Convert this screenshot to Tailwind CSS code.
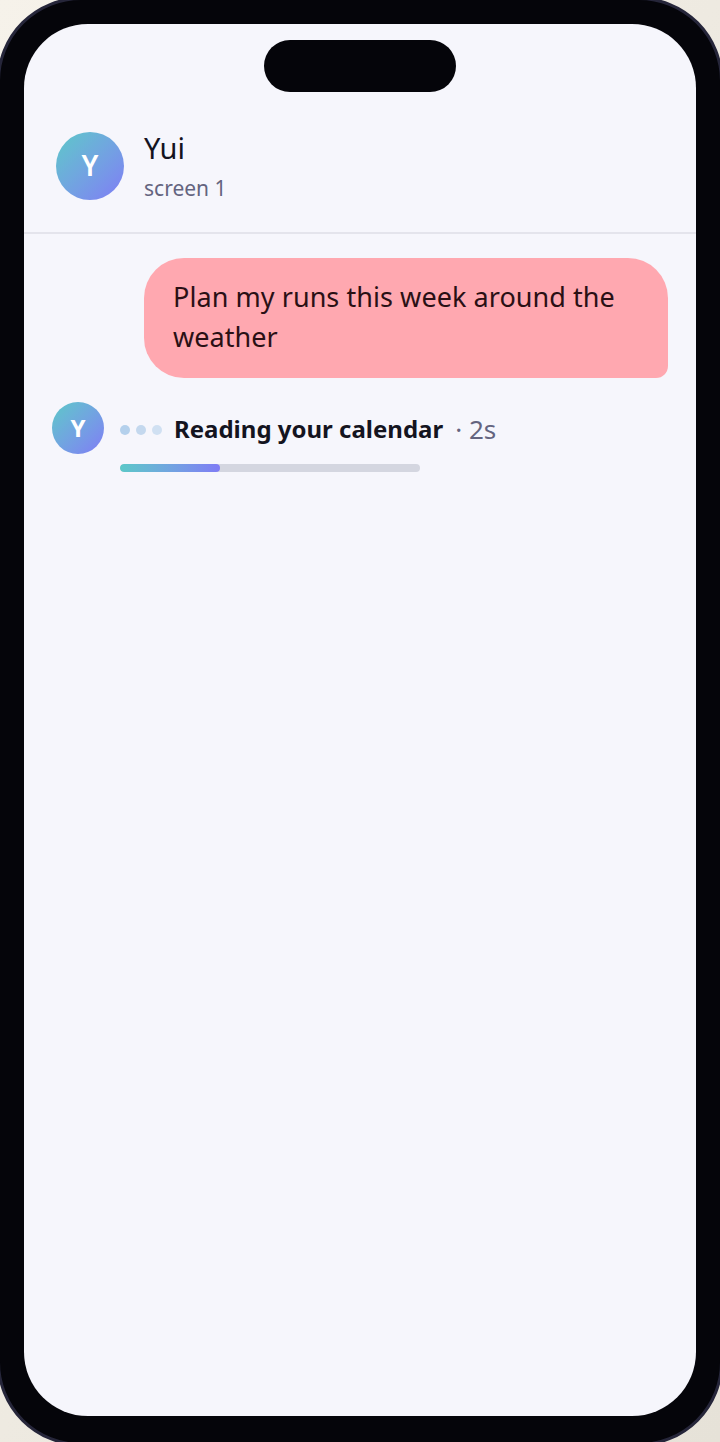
<!DOCTYPE html>
<html lang="en">
<head>
  <meta charset="UTF-8" />
  <meta name="viewport" content="width=device-width, initial-scale=1.0" />
  <title>Yui</title>
  <script src="https://cdn.jsdelivr.net/npm/@tailwindcss/browser@4"></script>
</head>
<body class="h-[1442px] w-[720px] overflow-hidden bg-gradient-to-br from-[#f6f2ea] to-[#e6e2d8] font-['Noto_Sans',sans-serif]">
  <!-- phone frame -->
  <div class="-ml-[3px] -mt-[3px] h-[1449px] w-[726px] rounded-[84px] border-[3px] border-[#26263a] bg-[#05050a] p-[24px]">
    <div class="relative flex h-[1392px] w-full flex-col overflow-hidden rounded-[64px] bg-[#f6f6fc]">
      <!-- notch -->
      <div class="absolute left-[240px] top-[16px] h-[52px] w-[192px] rounded-[26px] bg-[#05050a]"></div>

      <!-- header -->
      <div class="flex h-[210px] items-start gap-5 border-b-2 border-[#e4e4ec] pl-8 pt-[108px]">
        <div class="flex size-[68px] items-center justify-center rounded-full bg-gradient-to-br from-[#5bc8c8] to-[#7f7bf5] pb-0.5 text-[28px] font-semibold text-white">Y</div>
        <div class="-mt-1">
          <div class="text-[29px] leading-[40px] text-[#14141f]">Yui</div>
          <div class="mt-1 text-[21px] leading-[32px] text-[#64647f]">screen 1</div>
        </div>
      </div>

      <!-- messages -->
      <div class="flex flex-col px-7 pt-6">
        <div class="ml-auto h-[120px] w-[524px] rounded-[40px] rounded-br-xl bg-[#ffa8b0] py-[19px] pl-[29px] pr-7 text-[27px] leading-[40px] tracking-[0.06px] text-[#2a1015]">Plan my runs this week around the weather</div>

        <div class="mt-6 flex gap-4">
          <div class="flex size-[52px] items-center justify-center rounded-full bg-gradient-to-br from-[#5bc8c8] to-[#7f7bf5] text-2xl font-bold text-white">Y</div>
          <div>
            <div class="flex h-[54px] items-center">
              <span class="mt-0.5 size-2.5 rounded-full bg-[#b4d0ec]"></span>
              <span class="ml-1.5 mt-0.5 size-2.5 rounded-full bg-[#c4d8ee]"></span>
              <span class="ml-1.5 mt-0.5 size-2.5 rounded-full bg-[#d0e0f2]"></span>
              <span class="ml-3 text-[24px] font-bold text-[#14141f]">Reading your calendar</span>
              <span class="ml-3 text-[26px] text-[#64647f]">· 2s</span>
            </div>
            <div class="mt-2 h-2 w-[300px] overflow-hidden rounded-full bg-[#d4d6e0]">
              <div class="h-full w-[100px] rounded-full bg-gradient-to-r from-[#5bc8c8] to-[#7f7bf5]"></div>
            </div>
          </div>
        </div>
      </div>
    </div>
  </div>
</body>
</html>
